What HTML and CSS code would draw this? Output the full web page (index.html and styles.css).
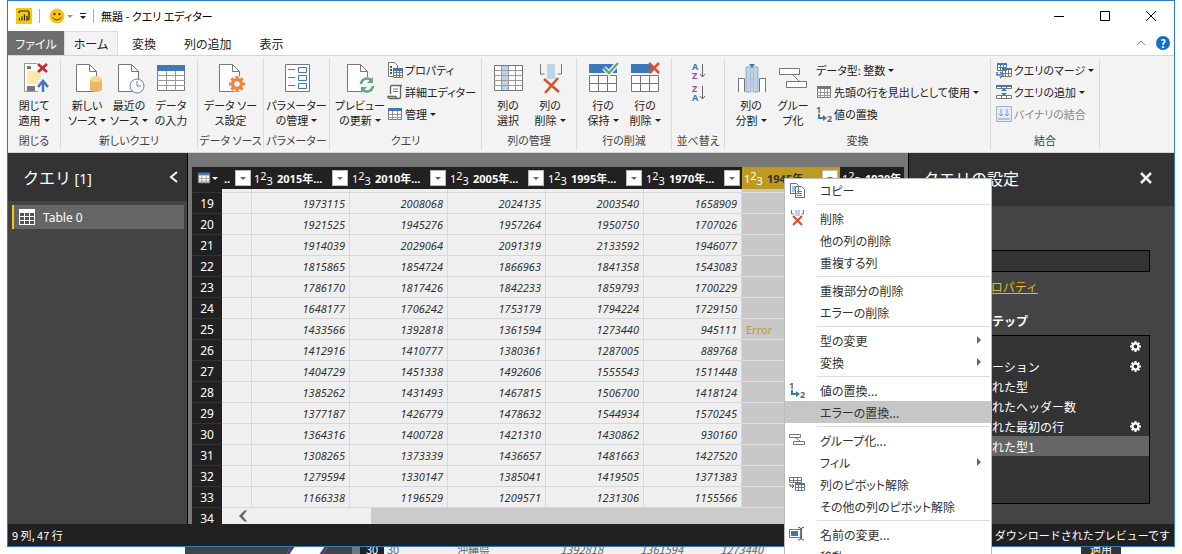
FILE: index.html
```html
<!DOCTYPE html>
<html lang="ja">
<head>
  <meta charset="UTF-8" />
  <meta name="viewport" content="width=device-width, initial-scale=1.0"/>
  <title>無題 - クエリ エディター</title>
  <link rel="stylesheet" href="styles.css">
</head>
<body>
  <svg class="sprite" aria-hidden="true">
    <symbol id="page" viewBox="0 0 28 32"><path d="M1.500 2.500h13l7 7v20h-20z" fill="#fff" stroke="#777"/><path d="M14.500 2.500v7h7" fill="none" stroke="#777"/></symbol>
    <symbol id="gear" viewBox="0 0 16 16"><path fill-rule="evenodd" d="M6.500 0h3v2.300l1.400.6L12.500 1.300l2.200 2.200-1.600 1.600.6 1.400H16v3h-2.300l-.6 1.400 1.600 1.600-2.200 2.200-1.600-1.600-1.400.6V16h-3v-2.300l-1.400-.6-1.600 1.600-2.200-2.200 1.600-1.600-.6-1.400H0v-3h2.300l.6-1.400-1.600-1.600 2.200-2.200 1.600 1.600 1.400-.6zM8 5.200a2.800 2.800 0 1 0 0 5.600 2.800 2.800 0 0 0 0-5.600z"/></symbol>
    <symbol id="table16" viewBox="0 0 16 16"><path d="M1.500 2.500h13v11h-13z" fill="#fff" stroke="#777"/><path d="M1 2h14v3H1z" fill="#3d78b8"/><path d="M1 8.500h14M1 11.500h14M5.500 5v9M10.500 5v9" stroke="#999"/></symbol>
    <symbol id="rows" viewBox="0 0 32 32"><path d="M2 2h28v9H2z" fill="#3d78b8"/><path d="M2.500 13.500h27v16h-27zM2 21.500h28M11.500 13v17M20.500 13v17" fill="#fff" stroke="#777"/></symbol>
    <symbol id="group" viewBox="0 0 32 32"><path d="M2.500 6.500h20v6h-20zM9.500 19.500h20v6h-20z" fill="#fff" stroke="#777"/><path d="M16 13l6 6" stroke="#777"/></symbol>
    <symbol id="replace" viewBox="0 0 16 16"><text x="0" y="7" class="glyph">1</text><text x="11" y="16" class="glyph">2</text><path d="M3 8v4h5" fill="none" stroke="#3d78b8" stroke-width="2"/><path d="M7 9l4 3-4 3z" fill="#3d78b8"/></symbol>
  </svg>

  <div class="window">
    <header class="titlebar">
      <svg class="logo" viewBox="0 0 16 16"><path d="M0 0h16v16H0z" fill="#f2c811"/><path d="M3 5V4.500q0-1.500 1.500-1.500h7q1.500 0 1.500 1.500v6q0 1.500-1.500 1.500M3.500 12.500V10M6 12.500V8.500M8.500 12.500V6.500M11 12.500V8" fill="none" stroke="#222" stroke-width="1.200"/></svg>
      <span class="divider"></span>
      <button class="plain smiley" aria-label="フィードバック"><svg viewBox="0 0 16 16"><circle cx="8" cy="8" r="7.500" fill="#fbc312"/><circle cx="5.500" cy="6" r="1.200" fill="#433"/><circle cx="10.500" cy="6" r="1.200" fill="#433"/><path d="M3.500 9.500q4.500 5 9 0" fill="none" stroke="#433"/></svg><i class="caret dim"></i></button>
      <button class="plain more" aria-label="クイック アクセス"><i class="bar"></i><i class="caret"></i></button>
      <span class="divider"></span>
      <h1>無題 - クエリ エディター</h1>
      <div class="controls">
        <button class="plain" aria-label="最小化"><svg viewBox="0 0 12 12"><path d="M1 6.500h10" stroke="#000"/></svg></button>
        <button class="plain" aria-label="最大化"><svg viewBox="0 0 12 12"><path d="M1.500 1.500h9v9h-9z" fill="none" stroke="#000"/></svg></button>
        <button class="plain" aria-label="閉じる"><svg viewBox="0 0 12 12"><path d="M1 1l10 10M11 1L1 11" stroke="#000"/></svg></button>
      </div>
    </header>

    <nav class="tabs">
      <button class="tab file">ファイル</button>
      <button class="tab active">ホーム</button>
      <button class="tab">変換</button>
      <button class="tab">列の追加</button>
      <button class="tab">表示</button>
      <span class="tab-tools">
        <button class="plain" aria-label="リボンを折りたたむ"><svg width="10" height="10" viewBox="0 0 10 10"><path d="M1 7l4-4 4 4" fill="none" stroke="#888"/></svg></button>
        <button class="help" aria-label="ヘルプ">?</button>
      </span>
    </nav>

    <div class="ribbon">
      <section class="group">
        <div class="tools">
          <button class="btn"><svg viewBox="0 0 32 32"><path d="M6.500 1.500h16v28h-16z" fill="#fff" stroke="#999"/><path d="M9 4h4v3H9zM9 24h8v5H9z" fill="#777"/><path d="M9 9h14v13H9z" fill="#fdeaa8"/><path d="M19 0h12v12H19z" fill="#f3f3f3"/><path d="M20 2l9 8M29 2l-9 8" stroke="#c8232c" stroke-width="2.500"/><path d="M20 18h12v14H20z" fill="#f3f3f3"/><path d="M25 30V20M20 25l5-6 5 6" fill="none" stroke="#3d78b8" stroke-width="2.500"/></svg><span>閉じて<br>適用<i class="caret"></i></span></button>
        </div>
        <h2>閉じる</h2>
      </section>
      <section class="group">
        <div class="tools">
          <button class="btn"><svg viewBox="0 0 32 32"><use href="#page" x="4" width="28" height="32"/><path d="M19 17v11q6 4 12 0V17z" fill="#ebb868"/><ellipse cx="25" cy="17" rx="6" ry="3" fill="#f7d797"/></svg><span>新しい<br>ソース<i class="caret"></i></span></button>
          <button class="btn"><svg viewBox="0 0 32 32"><use href="#page" x="4" width="28" height="32"/><circle cx="24" cy="24" r="7" fill="#fff" stroke="#5684b4"/><path d="M24 19v5h4" fill="none" stroke="#5684b4"/></svg><span>最近の<br>ソース<i class="caret"></i></span></button>
          <button class="btn"><svg viewBox="0 0 32 32"><path d="M2.500 3.500h27v25h-27z" fill="#fff" stroke="#777"/><path d="M2 3h28v6H2z" fill="#3d78b8"/><path d="M2 13.500h28M2 18.500h28M2 23.500h28M11.500 9v20M20.500 9v20" stroke="#999"/></svg><span>データ<br>の入力</span></button>
        </div>
        <h2>新しいクエリ</h2>
      </section>
      <section class="group">
        <div class="tools">
          <button class="btn wide"><svg viewBox="0 0 32 32"><use href="#page" x="3" width="28" height="32"/><circle cx="22" cy="22" r="8" fill="#f3f3f3"/><use href="#gear" x="14" y="14" width="16" height="16" fill="#e8853f"/></svg><span>データ ソー<br>ス設定</span></button>
        </div>
        <h2>データ ソース</h2>
      </section>
      <section class="group">
        <div class="tools">
          <button class="btn wide"><svg viewBox="0 0 32 32"><path d="M4.500 2.500h24v27h-24z" fill="#fff" stroke="#777"/><path d="M17.500 5.500h8v5h-8zM17.500 13.500h8v5h-8zM17.500 21.500h8v5h-8z" fill="none" stroke="#3d78b8"/><path d="M7 7.500h7M7 15.500h7M7 23.500h7" stroke="#777"/></svg><span>パラメーター<br>の管理<i class="caret"></i></span></button>
        </div>
        <h2>パラメーター</h2>
      </section>
      <section class="group">
        <div class="tools">
          <button class="btn"><svg viewBox="0 0 32 32"><use href="#page" x="2" width="28" height="32"/><circle cx="23" cy="23" r="8" fill="#f3f3f3"/><path d="M17 22a6 6 0 0 1 10-4M29 24a6 6 0 0 1-10 4" fill="none" stroke="#67a583" stroke-width="2.500"/><path d="M29 15v6h-6zM17 31v-6h6z" fill="#67a583"/></svg><span>プレビュー<br>の更新<i class="caret"></i></span></button>
          <div class="list">
            <button class="row"><svg viewBox="0 0 16 16"><path d="M1.500.500h6l3 3v11h-9z" fill="#fff" stroke="#777"/><path d="M3 5h2M3 8h2M3 11h2" stroke="#555" stroke-width="2"/><path d="M6.500 7.500h9v8h-9zM6 10.500h10M6 13.500h10M9.500 8v8M12.500 8v8" fill="#fff" stroke="#777"/><path d="M6 6h10v3H6z" fill="#3d78b8"/></svg>プロパティ</button>
            <button class="row"><svg viewBox="0 0 16 16"><path d="M3.500 10V3q0-1.500 1.500-1.500h10q-1.500 0-1.500 2V13q0 1.500-2 1.500H3q-2 0-2-2h8q0 2 2 2" fill="#fff" stroke="#666" stroke-width="1.400"/><path d="M6 5h5M6 7.500h5" stroke="#777"/></svg>詳細エディター</button>
            <button class="row"><svg viewBox="0 0 16 16"><use href="#table16"/></svg>管理<i class="caret"></i></button>
          </div>
        </div>
        <h2>クエリ</h2>
      </section>
      <section class="group">
        <div class="tools">
          <button class="btn"><svg viewBox="0 0 32 32"><path d="M2.500 3.500h28v25h-28z" fill="#fff" stroke="#777"/><path d="M9 4h7v24H9z" fill="#bcd3ea"/><path d="M2 8.500h28M2 13.500h28M2 18.500h28M2 23.500h28M9.500 4v24M16.500 4v24M23.500 4v24" stroke="#999"/></svg><span>列の<br>選択</span></button>
          <button class="btn"><svg viewBox="0 0 32 32"><path d="M6.500 2v10h4M27.500 2v10h-4" fill="none" stroke="#777"/><path d="M13 2h8v15h-8z" fill="#bcd3ea"/><path d="M10 17l15 13M24 16L11 31" stroke="#dc5029" stroke-width="2.500"/></svg><span>列の<br>削除<i class="caret"></i></span></button>
        </div>
        <h2>列の管理</h2>
      </section>
      <section class="group">
        <div class="tools">
          <button class="btn"><svg viewBox="0 0 32 32"><use href="#rows"/><path d="M17 6l5 5 9-10" fill="none" stroke="#f3f3f3" stroke-width="5"/><path d="M17 6l5 5 9-10" fill="none" stroke="#6ba483" stroke-width="2.500"/></svg><span>行の<br>保持<i class="caret"></i></span></button>
          <button class="btn"><svg viewBox="0 0 32 32"><use href="#rows"/><path d="M30 1v11h-8l4-6-4-5z" fill="#f3f3f3"/><path d="M20 1l10 10M30 1L20 11" stroke="#dc5029" stroke-width="2.500"/></svg><span>行の<br>削除<i class="caret"></i></span></button>
        </div>
        <h2>行の削減</h2>
      </section>
      <section class="group">
        <div class="tools sort">
          <button class="plain" aria-label="昇順"><svg viewBox="0 0 16 18"><text x="2" y="8" class="glyph blue">A</text><text x="2" y="17" class="glyph purple">Z</text><path d="M12.500 2v13M10 12l2.500 3 2.500-3" fill="none" stroke="#666"/></svg></button>
          <button class="plain" aria-label="降順"><svg viewBox="0 0 16 18"><text x="2" y="8" class="glyph purple">Z</text><text x="2" y="17" class="glyph blue">A</text><path d="M12.500 2v13M10 12l2.500 3 2.500-3" fill="none" stroke="#666"/></svg></button>
        </div>
        <h2>並べ替え</h2>
      </section>
      <section class="group">
        <div class="tools">
          <button class="btn"><svg viewBox="0 0 32 32"><path d="M3.500 30V16.500h6V30M24.500 30V16.500h6V30" fill="#fff" stroke="#777"/><path d="M11 5h5v25h-5zM18 5h5v25h-5z" fill="#bcd3ea" stroke="#9ab"/><path d="M14 2h6l-3 4z" fill="#3d78b8"/></svg><span>列の<br>分割<i class="caret"></i></span></button>
          <button class="btn"><svg viewBox="0 0 32 32"><use href="#group"/></svg><span>グルー<br>プ化</span></button>
          <div class="list roomy">
            <button class="row">データ型: 整数<i class="caret"></i></button>
            <button class="row"><svg viewBox="0 0 16 16"><path d="M1.500 2.500h13v11h-13z" fill="#fff" stroke="#777"/><path d="M1 2h14v3H1z" fill="#777"/><path d="M1 8.500h14M1 11.500h14M4.500 5v9M8.500 5v9M11.500 5v9" stroke="#999"/></svg>先頭の行を見出しとして使用<i class="caret"></i></button>
            <button class="row"><svg viewBox="0 0 16 16"><use href="#replace"/></svg>値の置換</button>
          </div>
        </div>
        <h2>変換</h2>
      </section>
      <section class="group">
        <div class="tools">
          <div class="list">
            <button class="row"><svg viewBox="0 0 16 16"><path d="M1.500 1.500h9v7h-9zM1 5.500h10M4.500 2v6M7.500 2v6M6.500 6.500h9v8h-9zM6 11.500h10M9.500 7v7M12.500 7v7" fill="#fff" stroke="#777"/><path d="M1 1h10v2H1zM6 6h10v2H6z" fill="#3d78b8"/><path d="M1 10v3h4M4 10l3 3-3 3" fill="none" stroke="#3d78b8" stroke-width="1.500"/></svg>クエリのマージ<i class="caret"></i></button>
            <button class="row"><svg viewBox="0 0 16 16"><path d="M.500 1.500h15v3H.500zM.500 11.500h15v3H.500zM5.500 2v3M10.500 2v3M5.500 12v3M10.500 12v3" fill="#fff" stroke="#777"/><path d="M0 1h16v2H0z" fill="#3d78b8"/><path d="M5 7h6L8 4zM5 9h6l-3 3z" fill="#3d78b8"/></svg>クエリの追加<i class="caret"></i></button>
            <button class="row" disabled><svg viewBox="0 0 16 16"><path d="M.500.500h15v15H.500z" fill="#e4ebf6" stroke="#9fb4d4"/><path d="M5 3v7M3 8l2 2 2-2M11 3v7M9 8l2 2 2-2M2 13h12" fill="none" stroke="#7f9cc9"/></svg>バイナリの結合</button>
          </div>
        </div>
        <h2>結合</h2>
      </section>
    </div>

    <main class="workspace">
      <aside class="queries">
        <header>
          <h2>クエリ <span>[1]</span></h2>
          <button class="plain" aria-label="折りたたむ"><svg viewBox="0 0 10 12"><path d="M8 1L2 6l6 5" fill="none" stroke="#fff" stroke-width="2"/></svg></button>
        </header>
        <button class="query"><svg viewBox="0 0 16 16"><path d="M0 0h16v16H0z" fill="#fff"/><path d="M1 4h4v3H1zM6 4h4v3H6zM11 4h4v3h-4zM1 8h4v3H1zM6 8h4v3H6zM11 8h4v3h-4zM1 12h4v3H1zM6 12h4v3H6zM11 12h4v3h-4z" fill="#555"/></svg>Table 0</button>
      </aside>

      <div class="preview">
        <table>
          <colgroup><col class="c-num"><col class="c-cut"><col><col><col><col><col><col><col></colgroup>
          <thead>
            <tr>
              <th><button class="plain corner" aria-label="テーブル"><svg viewBox="0 0 16 16"><use href="#table16"/></svg><i class="caret"></i></button></th>
              <th><div class="head"><b>..</b><button class="filter" aria-label="フィルター"></button></div></th>
              <th><div class="head"><span class="type">1<sup>2</sup><sub>3</sub></span><b>2015年...</b><button class="filter" aria-label="フィルター"></button></div></th>
              <th><div class="head"><span class="type">1<sup>2</sup><sub>3</sub></span><b>2010年...</b><button class="filter" aria-label="フィルター"></button></div></th>
              <th><div class="head"><span class="type">1<sup>2</sup><sub>3</sub></span><b>2005年...</b><button class="filter" aria-label="フィルター"></button></div></th>
              <th><div class="head"><span class="type">1<sup>2</sup><sub>3</sub></span><b>1995年...</b><button class="filter" aria-label="フィルター"></button></div></th>
              <th><div class="head"><span class="type">1<sup>2</sup><sub>3</sub></span><b>1970年...</b><button class="filter" aria-label="フィルター"></button></div></th>
              <th class="selected"><div class="head"><span class="type">1<sup>2</sup><sub>3</sub></span><b>1945年</b><button class="filter" aria-label="フィルター"></button></div></th>
              <th><div class="head"><span class="type">1<sup>2</sup><sub>3</sub></span><b>1920年</b></div></th>
            </tr>
          </thead>
          <tbody>
            <tr class="cut"><th></th><td></td><td></td><td></td><td></td><td></td><td></td><td class="sel"></td><td></td></tr>
            <tr><th>19</th><td></td><td>1973115</td><td>2008068</td><td>2024135</td><td>2003540</td><td>1658909</td><td class="sel"></td><td></td></tr>
            <tr><th>20</th><td></td><td>1921525</td><td>1945276</td><td>1957264</td><td>1950750</td><td>1707026</td><td class="sel"></td><td></td></tr>
            <tr><th>21</th><td></td><td>1914039</td><td>2029064</td><td>2091319</td><td>2133592</td><td>1946077</td><td class="sel"></td><td></td></tr>
            <tr><th>22</th><td></td><td>1815865</td><td>1854724</td><td>1866963</td><td>1841358</td><td>1543083</td><td class="sel"></td><td></td></tr>
            <tr><th>23</th><td></td><td>1786170</td><td>1817426</td><td>1842233</td><td>1859793</td><td>1700229</td><td class="sel"></td><td></td></tr>
            <tr><th>24</th><td></td><td>1648177</td><td>1706242</td><td>1753179</td><td>1794224</td><td>1729150</td><td class="sel"></td><td></td></tr>
            <tr><th>25</th><td></td><td>1433566</td><td>1392818</td><td>1361594</td><td>1273440</td><td>945111</td><td class="sel error">Error</td><td></td></tr>
            <tr><th>26</th><td></td><td>1412916</td><td>1410777</td><td>1380361</td><td>1287005</td><td>889768</td><td class="sel"></td><td></td></tr>
            <tr><th>27</th><td></td><td>1404729</td><td>1451338</td><td>1492606</td><td>1555543</td><td>1511448</td><td class="sel"></td><td></td></tr>
            <tr><th>28</th><td></td><td>1385262</td><td>1431493</td><td>1467815</td><td>1506700</td><td>1418124</td><td class="sel"></td><td></td></tr>
            <tr><th>29</th><td></td><td>1377187</td><td>1426779</td><td>1478632</td><td>1544934</td><td>1570245</td><td class="sel"></td><td></td></tr>
            <tr><th>30</th><td></td><td>1364316</td><td>1400728</td><td>1421310</td><td>1430862</td><td>930160</td><td class="sel"></td><td></td></tr>
            <tr><th>31</th><td></td><td>1308265</td><td>1373339</td><td>1436657</td><td>1481663</td><td>1427520</td><td class="sel"></td><td></td></tr>
            <tr><th>32</th><td></td><td>1279594</td><td>1330147</td><td>1385041</td><td>1419505</td><td>1371383</td><td class="sel"></td><td></td></tr>
            <tr><th>33</th><td></td><td>1166338</td><td>1196529</td><td>1209571</td><td>1231306</td><td>1155566</td><td class="sel"></td><td></td></tr>
            <tr><th>34</th><td colspan="8" class="scroll-cell"><div class="scrollbar"><svg viewBox="0 0 10 12"><path d="M9 0H6L0 6l6 6h3L4 6z" fill="#666"/></svg><span class="thumb"></span></div></td></tr>
          </tbody>
        </table>
      </div>

      <aside class="settings">
        <header>
          <h2>クエリの設定</h2>
          <button class="plain" aria-label="閉じる"><svg viewBox="0 0 12 12"><path d="M1 1l10 10M11 1L1 11" stroke="#eee" stroke-width="2.500"/></svg></button>
        </header>
        <div class="settings-body">
          <label for="name">名前</label>
          <input id="name" type="text">
          <a href="#">すべてのプロパティ</a>
          <h3>適用したステップ</h3>
          <ul class="steps">
            <li>ソース<svg><use href="#gear"/></svg></li>
            <li>ナビゲーション<svg><use href="#gear"/></svg></li>
            <li>変更された型</li>
            <li>昇格されたヘッダー数</li>
            <li>削除された最初の行<svg><use href="#gear"/></svg></li>
            <li class="current">変更された型1</li>
          </ul>
        </div>
      </aside>
    </main>

    <footer class="status"><span>9 列, 47 行</span><span>ダウンロードされたプレビューです</span></footer>
  </div>

  <!-- page behind the window -->
  <div class="behind">
    <div class="photo"><i></i></div>
    <div class="back-num">30</div>
    <div class="back-row"><span>30</span><span>沖縄県</span><span>1392818</span><span>1361594</span><span>1273440</span></div>
    <div class="back-btn">適用</div>
  </div>

  <div class="menu" role="menu">
    <button role="menuitem"><svg viewBox="0 0 16 16"><path d="M1.500 1.500h6l2 2v8h-8zM6.500 4.500h6l3 3v8h-9z" fill="#fff" stroke="#5a7490"/><path d="M3 5h3M3 7h3M3 9h3M8 9.500h5M8 11.500h5M8 13.500h5" stroke="#5684b4"/></svg>コピー</button>
    <hr>
    <button role="menuitem"><svg viewBox="0 0 16 16"><path d="M2.500 0v4h2M14.500 0v4h-2" fill="none" stroke="#678"/><path d="M6 0h5v6H6z" fill="#bcd3ea"/><path d="M4 6l9 9M13 6l-9 9" stroke="#dc4a29" stroke-width="2"/></svg>削除</button>
    <button role="menuitem">他の列の削除</button>
    <button role="menuitem">重複する列</button>
    <hr>
    <button role="menuitem">重複部分の削除</button>
    <button role="menuitem">エラーの削除</button>
    <hr>
    <button role="menuitem" class="sub">型の変更</button>
    <button role="menuitem" class="sub">変換</button>
    <hr>
    <button role="menuitem"><svg viewBox="0 0 16 16"><use href="#replace"/></svg>値の置換...</button>
    <button role="menuitem" class="hover">エラーの置換...</button>
    <hr>
    <button role="menuitem"><svg viewBox="0 0 16 16"><path d="M.500 2.500h11v3H.500zM4.500 9.500h11v3h-11zM7 6l4 3" fill="#fff" stroke="#777"/></svg>グループ化...</button>
    <button role="menuitem" class="sub">フィル</button>
    <button role="menuitem"><svg viewBox="0 0 16 16"><path d="M.500 1.500h12v5H.500zM0 4.500h13M4.500 2v5M8.500 2v5M6.500 7.500h9v7h-9zM6 11.500h10M9.500 8v7M12.500 8v7" fill="#fff" stroke="#777"/><path d="M6 7h10v2H6z" fill="#3d78b8"/><path d="M1 8v2h4M3 8l2 2-2 2" fill="none" stroke="#555"/></svg>列のピボット解除</button>
    <button role="menuitem">その他の列のピボット解除</button>
    <hr>
    <button role="menuitem"><svg viewBox="0 0 16 16"><path d="M.500 3.500h12v8H.500z" fill="#fff" stroke="#777"/><path d="M2 5h7v5H2z" fill="#3d78b8"/><path d="M9 1.500q3 0 3 1.500v9q0 2-3 2M15 1.500q-3 0-3 1.500v9q0 2 3 2" fill="none" stroke="#555"/></svg>名前の変更...</button>
    <button role="menuitem">移動</button>
  </div>
</body>
</html>
```

FILE: styles.css
```css
* {
  box-sizing: border-box;
}

body {
  margin: 0;
  height: 100vh;
  overflow: hidden;
  position: relative;
  background: #fff;
  color: #222;
  font-family: "Noto Sans CJK JP", sans-serif;
  font-size: 12px;
  line-height: 15px;
}

h1, h2, h3, ul {
  margin: 0;
  padding: 0;
  font-size: inherit;
  font-weight: normal;
}

button {
  font: inherit;
  color: inherit;
  background: none;
  border: none;
  padding: 0;
  white-space: nowrap;
}

.sprite {
  display: none;
}

.window {
  height: calc(100vh - 7px);
  margin: 0 7px;
  border: 1px solid #2a7fc4;
  display: flex;
  flex-direction: column;
  overflow: hidden;
}

.caret {
  display: inline-block;
  border: 3px solid transparent;
  border-top-color: #222;
  border-bottom: none;
  margin-left: 4px;
  vertical-align: 3px;
}

.caret.dim { border-top-color: #999; }

.plain {
  display: flex;
  align-items: center;
  justify-content: center;
}

/* kana are set proportionally in the chrome */
.titlebar, .tabs, .ribbon, .menu {
  font-feature-settings: "palt";
}

.titlebar {
  height: 30px;
  flex: none;
  display: flex;
  align-items: center;
  gap: 7px;
  padding-left: 8px;
  color: #000;
}

.titlebar h1 { font-size: 11px; }

.logo { width: 16px; height: 16px; }
.divider { width: 1px; height: 14px; background: #aaa; }
.smiley svg { width: 16px; height: 16px; }
.smiley { margin-left: 2px; }
.smiley .caret { margin-left: 2px; }
.more { flex-direction: column; gap: 2px; }
.more .bar { width: 6px; height: 1px; background: #222; }
.more .caret { margin: 0; }

.controls {
  margin-left: auto;
  display: flex;
}

.controls button { width: 46px; height: 28px; }
.controls svg { width: 12px; height: 12px; }

.tabs {
  height: 24px;
  flex: none;
  display: flex;
}

.tab {
  padding: 0 14px;
}

.tab.file {
  background: #6e6e6e;
  color: #fff;
  width: 56px;
  padding: 0;
}

.tab.active {
  background: #f3f3f3;
  border: 1px solid #dcdcdc;
  border-bottom: none;
  width: 54px;
  padding: 0;
}

.tab-tools {
  margin-left: auto;
  display: flex;
  align-items: center;
  gap: 10px;
  padding-right: 4px;
}

.help {
  width: 14px;
  height: 14px;
  border-radius: 50%;
  background: #0e70c8;
  color: #fff;
  font-weight: bold;
  font-size: 11px;
  line-height: 14px;
}

.ribbon {
  height: 98px;
  flex: none;
  display: flex;
  background: #f3f3f3;
  border-top: 1px solid #d5d5d5;
  border-bottom: 1px solid #d5d5d5;
  padding: 2px 0;
  font-size: 11px;
}

.group {
  display: flex;
  flex-direction: column;
  padding: 1px 5px 2px;
  border-right: 1px solid #dcdcdc;
}

.group h2 {
  margin: auto -5px 0;
  text-align: center;
  color: #444;
  white-space: nowrap;
}

.tools { display: flex; }

.btn {
  min-width: 42px;
  padding-top: 3px;
  display: flex;
  flex-direction: column;
  align-items: center;
  gap: 4px;
}

.btn.wide {
  width: 61px;
  margin: 0 -3px;
}

.btn svg { width: 32px; height: 32px; }
.btn .caret, .row .caret { margin-left: 3px; }

.list {
  display: flex;
  flex-direction: column;
}

.btn + .list { margin-left: 2px; }
.list.roomy { padding-right: 6px; }

.row {
  height: 22px;
  display: flex;
  align-items: center;
}

.row svg {
  width: 16px;
  height: 16px;
  margin-right: 2px;
  overflow: visible;
}

.row:disabled { color: #888; }

.sort {
  flex-direction: column;
  align-items: center;
  gap: 4px;
  min-width: 42px;
  padding-top: 3px;
}

.sort svg {
  width: 16px;
  height: 18px;
  display: block;
  overflow: visible;
}

.glyph {
  font: bold 9px "Noto Sans", sans-serif;
  fill: #666;
}

.glyph.blue { fill: #3d78b8; }
.glyph.purple { fill: #8a55a8; }

.workspace {
  flex: 1;
  min-height: 0;
  display: flex;
  background: #777;
}

.queries {
  width: 180px;
  flex: none;
  background: #444;
  border-right: 1px solid #000;
  color: #fff;
}

.queries header {
  height: 48px;
  background: #333;
  display: flex;
  align-items: center;
  justify-content: space-between;
  padding: 0 8px 0 15px;
}

.queries h2 { font-size: 16px; line-height: 20px; }
.queries h2 span { font: 14px "Noto Sans", sans-serif; }
.queries header svg { width: 10px; height: 12px; }

.query {
  display: flex;
  align-items: center;
  gap: 8px;
  width: 172px;
  height: 24px;
  margin: 4px;
  padding-left: 5px;
  background: #666;
  border-left: 2px solid #f2c811;
  font-family: "Noto Sans", sans-serif;
}

.query svg { width: 16px; height: 16px; }

.preview {
  flex: 1;
  min-width: 0;
  overflow: hidden;
  margin: 14px 4px 0;
  background: #212121;
}

table {
  table-layout: fixed;
  width: 746px;
  border-collapse: separate;
  border-spacing: 0;
  font-family: "Noto Sans", "Noto Sans CJK JP", sans-serif;
}

col { width: 98px; }
.c-num, .c-cut { width: 30px; }

th, td {
  padding: 0;
  font-weight: normal;
}

thead th {
  height: 22px;
  background: #212121;
  color: #fff;
}

.corner { width: 30px; height: 22px; }
.corner svg { width: 14px; height: 14px; }
.corner .caret { border-top-color: #fff; margin-left: 1px; }

.head {
  display: flex;
  align-items: center;
  gap: 5px;
  padding: 0 2px;
  font-size: 11px;
}

.head b { white-space: nowrap; }

.type {
  width: 18px;
  flex: none;
  text-align: left;
}

sup, sub {
  font-size: 11px;
  line-height: 0;
}

sup { vertical-align: 3px; }
sub { vertical-align: -2px; }

.filter {
  flex: none;
  margin-left: auto;
  width: 16px;
  height: 16px;
  background: #fff;
  border: 1px solid #bbb;
}

.filter::before {
  content: "";
  display: block;
  width: 0;
  margin: auto;
  border: 3px solid transparent;
  border-top-color: #666;
  border-bottom: none;
}

thead .selected {
  background: #bf9a20;
}

thead .selected b { color: #333; }

tbody th {
  height: 21px;
  background: #212121;
  border-bottom: 1px solid #333;
  color: #fff;
  text-align: center;
}

tbody td {
  height: 21px;
  padding-right: 4px;
  background: #efefef;
  border-right: 1px solid #d8d8d8;
  border-bottom: 1px solid #d8d8d8;
  color: #333;
  font-size: 11px;
  font-style: italic;
  text-align: right;
}

.cut th, .cut td { height: 4px; }

td.sel {
  background: #c8c8c8;
  border-bottom-color: #dedede;
}

td.error {
  color: #c29b28;
  font-style: normal;
  text-align: left;
  padding-left: 4px;
}

td.scroll-cell {
  padding: 0;
  border: none;
  vertical-align: top;
}

.scrollbar {
  height: 16px;
  display: flex;
  align-items: center;
  padding-left: 17px;
}

.scrollbar svg { width: 9px; height: 12px; }

.thumb {
  flex: 1;
  height: 16px;
  margin-left: 123px;
  background: #cbcbcb;
}

.settings {
  width: 266px;
  flex: none;
  background: #444;
  border-left: 1px solid #000;
  color: #fff;
}

.settings header {
  height: 53px;
  background: #333;
  display: flex;
  align-items: center;
  justify-content: space-between;
  padding: 0 22px 4px 14px;
}

.settings h2 { font-size: 16px; line-height: 20px; }
.settings header svg { width: 12px; height: 12px; }

.settings-body {
  display: flex;
  flex-direction: column;
  align-items: flex-start;
  padding: 24px 24px 0 23px;
}

.settings label { margin-bottom: 5px; }

.settings input {
  width: 100%;
  height: 22px;
  background: #333;
  border: 1px solid #000;
  color: #fff;
}

.settings a {
  color: #e0b820;
  margin: 7px 0 19px;
}

.settings h3 { font-weight: bold; }

.steps {
  width: 100%;
  height: 169px;
  margin-top: 7px;
  background: #333;
  border: 1px solid #000;
  list-style: none;
}

.steps li {
  height: 20px;
  display: flex;
  align-items: center;
  justify-content: space-between;
  padding: 0 8px 0 23px;
}

.steps .current { background: #666; }

.steps svg {
  width: 11px;
  height: 11px;
  fill: #fff;
}

.status {
  height: 22px;
  flex: none;
  display: flex;
  align-items: center;
  justify-content: space-between;
  padding: 0 4px;
  background: #212121;
  color: #fff;
  font-size: 11px;
}

.behind {
  height: 7px;
  display: flex;
  align-items: flex-end;
  overflow: hidden;
  padding-left: 185px;
  font-size: 11px;
  line-height: 10px;
}

.photo {
  width: 175px;
  height: 7px;
  background: #444;
  border-right: 8px solid #777;
}

.photo i {
  display: block;
  width: 36px;
  height: 7px;
  margin-left: 104px;
  background: #fff;
  border-left: 3px solid #4b2f78;
  border-right: 3px solid #4b2f78;
  transform: skewX(-35deg);
}

.back-num {
  width: 24px;
  background: #212121;
  color: #fff;
  text-align: center;
}

.back-row {
  display: flex;
  background: #f5f0ee;
  color: #666;
  padding-left: 3px;
}

.back-row span {
  width: 80px;
  padding-right: 4px;
  text-align: right;
  font-style: italic;
}

.back-row span:nth-child(-n+2) {
  width: 70px;
  text-align: left;
  font-style: normal;
}

.back-btn {
  margin-left: auto;
  margin-right: 61px;
  width: 40px;
  background: #333;
  color: #fff;
  text-align: center;
}

.menu {
  position: absolute;
  left: 784px;
  top: 178px;
  width: 208px;
  background: #fff;
  border: 1px solid #bbb;
  color: #333;
}

.menu button {
  display: flex;
  align-items: center;
  width: 100%;
  height: 22px;
  padding-left: 35px;
}

.menu svg {
  width: 16px;
  height: 16px;
  margin-left: -31px;
  margin-right: 15px;
  overflow: visible;
}

.menu hr {
  height: 6px;
  margin: 0 1px 0 32px;
  border: none;
  background: linear-gradient(#ddd, #ddd) 0 3px / 100% 1px no-repeat;
}

.menu .hover {
  background: #c6c6c6;
}

.menu .sub::after {
  content: "";
  margin-left: auto;
  margin-right: 10px;
  border: 4px solid transparent;
  border-left-color: #666;
  border-right: none;
}
```
